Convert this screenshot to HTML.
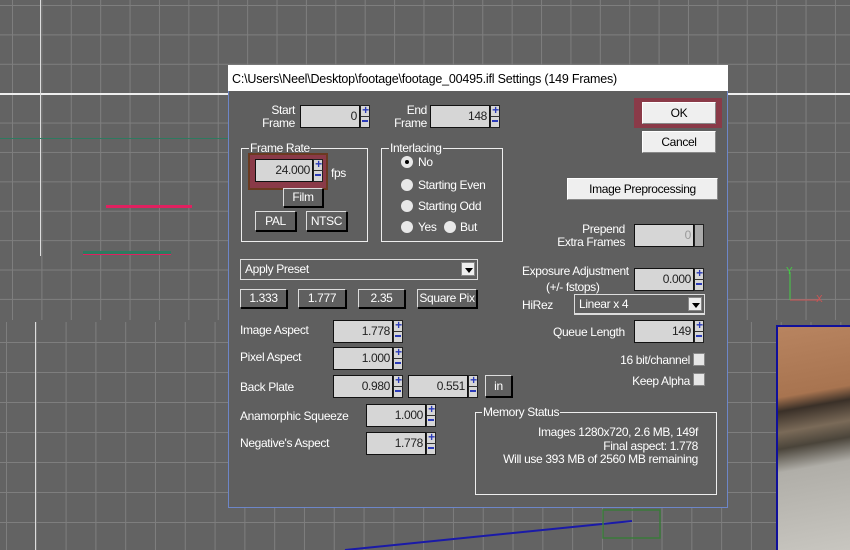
<!DOCTYPE html>
<html><head><style>
*{margin:0;padding:0;box-sizing:border-box}
body{width:850px;height:550px;overflow:hidden;background:#636363;position:relative;font-family:"Liberation Sans",sans-serif;font-size:12px;letter-spacing:-0.35px;color:#fff}
.a{position:absolute}
.vp1{left:0;top:0;width:850px;height:320px;background-color:#636363;
background-image:linear-gradient(90deg,#7e7e7e 1px,transparent 1px),linear-gradient(#7e7e7e 1px,transparent 1px);
background-size:29.4px 29.4px;background-position:12px 5px}
.vp2{left:0;top:322px;width:850px;height:228px;background-color:#636363;
background-image:linear-gradient(90deg,#7e7e7e 1px,transparent 1px),linear-gradient(#7e7e7e 1px,transparent 1px);
background-size:29.8px 30px;background-position:6px 20px}
.dlg{left:228px;top:65px;width:500px;height:443px;background:#5f5f5f;border:1px solid #6d86c8;border-top:none}
.title{left:228px;top:65px;width:500px;height:26px;background:#fff;color:#000;font-size:12.5px;letter-spacing:-0.2px;padding:7px 0 0 4px;white-space:nowrap}
.f{position:absolute;background:#d6d6d6;border:1px solid #111;color:#222;text-align:right;padding-right:2px;line-height:20px;height:23px}
.sp{position:absolute;width:10px;height:23px;background:#d6d6d6;border:1px solid #222;}
.sp:before{content:"+";position:absolute;left:0;top:-3px;width:9px;text-align:center;color:#2a3ab8;font-weight:bold;font-size:12px}
.sp:after{content:"";position:absolute;left:1px;top:14px;width:6px;height:2px;background:#2a3ab8}
.sp i{position:absolute;left:0;top:10px;width:9px;height:1px;background:#333}
.b{position:absolute;background:#5f5f5f;border:1px solid #ddd;border-right-color:#000;border-bottom-color:#000;box-shadow:1px 1px 0 #000;text-align:center;color:#fff;white-space:nowrap}
.wb{position:absolute;background:#efefef;border:1px solid #fff;border-right-color:#888;border-bottom-color:#888;color:#000;text-align:center;white-space:nowrap}
.g{position:absolute;border:1px solid #eee}
.lg{position:absolute;background:#5f5f5f;padding:0 1px;line-height:12px;white-space:nowrap}
.r{position:absolute;width:12px;height:12px;border-radius:50%;background:#e8e8e8}
.dd{position:absolute;border:1px solid #ddd;background:#5f5f5f;line-height:18px;padding-left:4px;white-space:nowrap}
.dd b{position:absolute;right:2px;top:2px;width:14px;height:14px;background:#eee;border:1px solid #888}
.dd b:after{content:"";position:absolute;left:3px;top:5px;border:4px solid transparent;border-top:5px solid #000}
.cb{position:absolute;width:12px;height:13px;background:#e6e6e6;border:1px solid #888}
.t{position:absolute;white-space:nowrap}
</style></head><body>
<div class="a vp1"></div>
<div class="a vp2"></div>
<div class="a" style="left:0;top:93px;width:850px;height:2px;background:#eee"></div>
<div class="a" style="left:40px;top:0;width:1px;height:256px;background:#ddd"></div>
<div class="a" style="left:35px;top:322px;width:1px;height:228px;background:#ddd"></div>
<div class="a" style="left:0;top:138px;width:228px;height:1px;background:#2e7a60"></div>
<div class="a" style="left:106px;top:205px;width:86px;height:3px;background:#e02060"></div>
<div class="a" style="left:83px;top:251px;width:88px;height:4px;background:#2e7a60;border-bottom:1px solid #e02060"></div>
<div class="a" style="left:776px;top:325px;width:74px;height:225px;border-left:2px solid #10109a;border-top:2px solid #10109a;background:linear-gradient(170deg,#b88460 0%,#a87450 30%,#3a3028 36%,#7a6a58 45%,#4a443a 52%,#b0aea8 62%,#c8c6c0 100%)"></div>
<svg class="a" style="left:0;top:0" width="850" height="550"><line x1="345" y1="550" x2="632" y2="521" stroke="#1a1aa8" stroke-width="2"/><rect x="603" y="510" width="57" height="28" fill="none" stroke="#3a7a3a" stroke-width="1.5"/>
<line x1="790" y1="272" x2="790" y2="300" stroke="#4c4"/><line x1="790" y1="300" x2="820" y2="300" stroke="#c55"/><text x="786" y="274" fill="#4c4" font-size="10" font-family="Liberation Sans">Y</text><text x="816" y="302" fill="#c55" font-size="10" font-family="Liberation Sans">X</text></svg>

<div class="a dlg"></div>
<div class="a title">C:\Users\Neel\Desktop\footage\footage_00495.ifl Settings (149 Frames)</div>

<div class="t" style="left:255px;top:104px;text-align:right;width:40px;line-height:13px">Start<br>Frame</div>
<div class="f" style="left:300px;top:105px;width:60px">0</div><div class="sp" style="left:360px;top:105px"><i></i></div>
<div class="t" style="left:387px;top:104px;text-align:right;width:40px;line-height:13px">End<br>Frame</div>
<div class="f" style="left:430px;top:105px;width:60px">148</div><div class="sp" style="left:490px;top:105px"><i></i></div>

<div class="a" style="left:634px;top:98px;width:88px;height:30px;background:#8a3a48"></div>
<div class="wb" style="left:642px;top:102px;width:74px;height:22px;line-height:20px">OK</div>
<div class="wb" style="left:642px;top:131px;width:74px;height:22px;line-height:20px">Cancel</div>

<div class="g" style="left:241px;top:148px;width:127px;height:94px"></div>
<div class="lg" style="left:249px;top:142px">Frame Rate</div>
<div class="a" style="left:248px;top:153px;width:80px;height:37px;background:#8a3a48;border:2px solid #6a3a20"></div>
<div class="f" style="left:255px;top:159px;width:58px">24.000</div><div class="sp" style="left:313px;top:159px"><i></i></div>
<div class="t" style="left:331px;top:166px">fps</div>
<div class="b" style="left:283px;top:188px;width:40px;height:19px;line-height:17px">Film</div>
<div class="b" style="left:255px;top:211px;width:41px;height:20px;line-height:18px">PAL</div>
<div class="b" style="left:306px;top:211px;width:41px;height:20px;line-height:18px">NTSC</div>

<div class="g" style="left:381px;top:148px;width:122px;height:94px"></div>
<div class="lg" style="left:389px;top:142px">Interlacing</div>
<div class="r" style="left:401px;top:156px"></div><div class="a" style="left:405px;top:160px;width:4px;height:4px;background:#000;border-radius:50%"></div>
<div class="t" style="left:418px;top:155px">No</div>
<div class="r" style="left:401px;top:179px"></div><div class="t" style="left:418px;top:178px">Starting Even</div>
<div class="r" style="left:401px;top:200px"></div><div class="t" style="left:418px;top:199px">Starting Odd</div>
<div class="r" style="left:401px;top:221px"></div><div class="t" style="left:418px;top:220px">Yes</div>
<div class="r" style="left:444px;top:221px"></div><div class="t" style="left:460px;top:220px">But</div>

<div class="wb" style="left:567px;top:178px;width:151px;height:22px;line-height:20px">Image Preprocessing</div>
<div class="t" style="left:545px;top:223px;width:80px;text-align:right;line-height:13px">Prepend<br>Extra Frames</div>
<div class="f" style="left:634px;top:224px;width:60px;color:#999">0</div><div class="a" style="left:694px;top:224px;width:10px;height:23px;background:#aaa;border:1px solid #222"></div>

<div class="dd" style="left:240px;top:259px;width:238px;height:21px">Apply Preset<b></b></div>
<div class="b" style="left:240px;top:289px;width:47px;height:19px;line-height:17px">1.333</div>
<div class="b" style="left:298px;top:289px;width:48px;height:19px;line-height:17px">1.777</div>
<div class="b" style="left:358px;top:289px;width:47px;height:19px;line-height:17px">2.35</div>
<div class="b" style="left:417px;top:289px;width:60px;height:19px;line-height:17px">Square Pix</div>

<div class="t" style="left:240px;top:323px">Image Aspect</div>
<div class="f" style="left:333px;top:320px;width:60px">1.778</div><div class="sp" style="left:393px;top:320px"><i></i></div>
<div class="t" style="left:240px;top:350px">Pixel Aspect</div>
<div class="f" style="left:333px;top:347px;width:60px">1.000</div><div class="sp" style="left:393px;top:347px"><i></i></div>
<div class="t" style="left:240px;top:380px">Back Plate</div>
<div class="f" style="left:333px;top:375px;width:60px">0.980</div><div class="sp" style="left:393px;top:375px"><i></i></div>
<div class="f" style="left:408px;top:375px;width:60px">0.551</div><div class="sp" style="left:468px;top:375px"><i></i></div>
<div class="b" style="left:485px;top:375px;width:27px;height:22px;line-height:20px">in</div>
<div class="t" style="left:240px;top:409px">Anamorphic Squeeze</div>
<div class="f" style="left:366px;top:404px;width:60px">1.000</div><div class="sp" style="left:426px;top:404px"><i></i></div>
<div class="t" style="left:240px;top:436px">Negative's Aspect</div>
<div class="f" style="left:366px;top:432px;width:60px">1.778</div><div class="sp" style="left:426px;top:432px"><i></i></div>

<div class="t" style="left:522px;top:264px">Exposure Adjustment</div>
<div class="t" style="left:546px;top:280px">(+/- fstops)</div>
<div class="f" style="left:634px;top:268px;width:60px">0.000</div><div class="sp" style="left:694px;top:268px"><i></i></div>
<div class="t" style="left:522px;top:298px">HiRez</div>
<div class="dd" style="left:574px;top:294px;width:131px;height:21px;border-bottom-width:2px">Linear x 4<b></b></div>
<div class="t" style="left:553px;top:325px">Queue Length</div>
<div class="f" style="left:634px;top:320px;width:60px">149</div><div class="sp" style="left:694px;top:320px"><i></i></div>
<div class="t" style="left:590px;top:353px;width:100px;text-align:right">16 bit/channel</div><div class="cb" style="left:693px;top:353px"></div>
<div class="t" style="left:590px;top:374px;width:100px;text-align:right">Keep Alpha</div><div class="cb" style="left:693px;top:373px"></div>

<div class="g" style="left:475px;top:412px;width:242px;height:83px"></div>
<div class="lg" style="left:482px;top:406px">Memory Status</div>
<div class="t" style="left:480px;top:426px;width:218px;text-align:right;line-height:13.5px">Images 1280x720, 2.6 MB, 149f<br>Final aspect: 1.778<br>Will use 393 MB of 2560 MB remaining</div>
</body></html>
